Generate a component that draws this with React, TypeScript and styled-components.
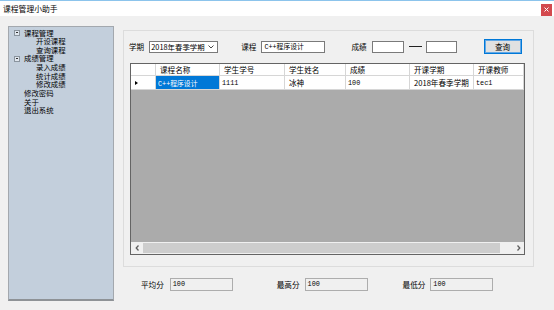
import styled, { createGlobalStyle } from 'styled-components';

const GlobalStyle = createGlobalStyle`
  html, body { margin: 0; padding: 0; background: #f0f0f0; }
  body {
    font-family: "Noto Sans CJK SC", "Liberation Sans", sans-serif;
    font-size: 7.6px;
    color: #000;
  }
  * { box-sizing: border-box; }
`;

const Window = styled.div`
  width: 554px;
  height: 310px;
  border-top: 1px solid #8cc4ec;
  background: #f0f0f0;
  overflow: hidden;
`;

const TitleBar = styled.div`
  height: 15px;
  background: #fff;
  display: flex;
  align-items: center;
  justify-content: space-between;
  padding: 0 2px 0 3px;
  font-size: 7.8px;
`;

const CloseBtn = styled.div`
  width: 11px;
  height: 12px;
  margin-top: 2px;
  background: #d3494e;
  display: flex;
  align-items: center;
  justify-content: center;
`;

const Body = styled.div`
  display: flex;
  align-items: flex-start;
  padding: 10px 0 0 8px;
  gap: 9px;
`;

const TreePanel = styled.div`
  width: 106px;
  height: 275px;
  background: #c3cfdc;
  border: 1px solid #a3a8ae;
  border-bottom: 2px solid #8e9296;
  padding-top: 1.5px;
`;

const TreeRow = styled.div<{ $level: number }>`
  height: 8.67px;
  line-height: 8.67px;
  font-size: 7.4px;
  display: flex;
  align-items: center;
  padding-left: ${(p) => (p.$level === 0 ? 15 : 27)}px;
  color: #000;
  white-space: nowrap;
`;

const Toggle = styled.span`
  width: 6px;
  height: 6px;
  border: 1px solid #8a949e;
  background: #dfe6ee;
  margin-left: -10px;
  margin-right: 4px;
  position: relative;
  &::after {
    content: "";
    position: absolute;
    left: 1px;
    right: 1px;
    top: 1.5px;
    height: 1px;
    background: #333;
  }
`;

const RightCol = styled.div`
  display: flex;
  flex-direction: column;
  margin-top: 4px;
`;

const GroupBox = styled.div`
  width: 411px;
  height: 237px;
  border: 1px solid #dcdcdc;
  padding: 8px 0 0 5px;
`;

const FilterRow = styled.div`
  display: flex;
  align-items: center;
  height: 15px;
`;

const Label = styled.span<{ $ml?: number }>`
  margin-left: ${(p) => p.$ml ?? 0}px;
  white-space: nowrap;
`;

const TextBox = styled.div<{ $w: number; $ml: number; $readOnly?: boolean }>`
  width: ${(p) => p.$w}px;
  height: ${(p) => (p.$readOnly ? 13 : 12)}px;
  margin-left: ${(p) => p.$ml}px;
  background: ${(p) => (p.$readOnly ? '#f0f0f0' : '#fff')};
  border: 1px solid ${(p) => (p.$readOnly ? '#adadad' : '#7a7a7a')};
  font-family: "Liberation Mono", "Noto Sans CJK SC", monospace;
  font-size: 6.8px;
  line-height: 10px;
  padding-left: 2px;
  white-space: nowrap;
  overflow: hidden;
`;

const Select = styled.div`
  width: 69px;
  height: 12px;
  margin-left: 5px;
  background: #fff;
  border: 1px solid #7a7a7a;
  display: flex;
  align-items: center;
  justify-content: space-between;
  padding: 0 3px 0 1px;
  font-size: 7.4px;
  white-space: nowrap;
`;

const Dash = styled.div`
  width: 13px;
  height: 1px;
  background: #222;
  margin-left: 5px;
`;

const Button = styled.div`
  width: 38px;
  height: 15px;
  margin-left: 27px;
  border: 1px solid #0078d7;
  box-shadow: inset 0 0 0 1px #62a8e6;
  background: #e1e1e1;
  display: flex;
  align-items: center;
  justify-content: center;
`;

const Grid = styled.div`
  width: 395px;
  height: 192px;
  margin: 9px 0 0 1px;
  border: 1px solid #646464;
  background: #ababab;
  display: flex;
  flex-direction: column;
`;

const GridRow = styled.div<{ $h: number }>`
  display: grid;
  grid-template-columns: 25px 64px 65px 61px 64px 64px 50px;
  height: ${(p) => p.$h}px;
  background: #fff;
  border-bottom: 1px solid #d6d6d6;
`;

const Cell = styled.div<{ $selected?: boolean; $mono?: boolean }>`
  border-right: 1px solid #d6d6d6;
  padding-left: ${(p) => (p.$mono ? 2 : 4)}px;
  display: flex;
  align-items: center;
  white-space: nowrap;
  overflow: hidden;
  background: ${(p) => (p.$selected ? '#0078d7' : 'transparent')};
  color: ${(p) => (p.$selected ? '#fff' : '#000')};
  font-family: ${(p) =>
    p.$mono ? '"Liberation Mono", "Noto Sans CJK SC", monospace' : 'inherit'};
  font-size: ${(p) => (p.$mono ? '6.8px' : 'inherit')};
`;

const RowPointer = styled.span`
  width: 0;
  height: 0;
  border-top: 2.5px solid transparent;
  border-bottom: 2.5px solid transparent;
  border-left: 3px solid #000;
`;

const GridFill = styled.div`
  flex: 1;
`;

const HScroll = styled.div`
  height: 12px;
  background: #f0f0f0;
  display: flex;
  align-items: stretch;
`;

const ScrollArrow = styled.div`
  width: 12px;
  display: flex;
  align-items: center;
  justify-content: center;
`;

const Track = styled.div`
  flex: 1;
  display: flex;
  padding: 1px 0;
`;

const Thumb = styled.div`
  width: 357px;
  background: #cdcdcd;
`;

const StatsRow = styled.div`
  display: flex;
  align-items: center;
  margin-top: 11px;
  height: 13px;
`;

const Chevron = ({ dir }: { dir: 'l' | 'r' }) => (
  <svg width="5" height="6" viewBox="0 0 5 6">
    <polyline
      points={dir === 'l' ? '3.5,0.5 1.2,3 3.5,5.5' : '1.5,0.5 3.8,3 1.5,5.5'}
      fill="none"
      stroke="#606060"
      strokeWidth="1.3"
    />
  </svg>
);

const columns = ['课程名称', '学生学号', '学生姓名', '成绩', '开课学期', '开课教师'];

export default function App() {
  return (
    <Window>
      <GlobalStyle />
      <TitleBar>
        <span>课程管理小助手</span>
        <CloseBtn>
          <svg width="5" height="5" viewBox="0 0 5 5">
            <path d="M0.5 0.5 L4.5 4.5 M4.5 0.5 L0.5 4.5" stroke="#fff" strokeWidth="1" />
          </svg>
        </CloseBtn>
      </TitleBar>
      <Body>
        <TreePanel>
          <TreeRow $level={0}><Toggle />课程管理</TreeRow>
          <TreeRow $level={1}>开设课程</TreeRow>
          <TreeRow $level={1}>查询课程</TreeRow>
          <TreeRow $level={0}><Toggle />成绩管理</TreeRow>
          <TreeRow $level={1}>录入成绩</TreeRow>
          <TreeRow $level={1}>统计成绩</TreeRow>
          <TreeRow $level={1}>修改成绩</TreeRow>
          <TreeRow $level={0}>修改密码</TreeRow>
          <TreeRow $level={0}>关于</TreeRow>
          <TreeRow $level={0}>退出系统</TreeRow>
        </TreePanel>
        <RightCol>
          <GroupBox>
            <FilterRow>
              <Label>学期</Label>
              <Select>
                <span>2018年春季学期</span>
                <svg width="6" height="4" viewBox="0 0 6 4">
                  <polyline points="0.5,0.5 3,3 5.5,0.5" fill="none" stroke="#333" strokeWidth="0.9" />
                </svg>
              </Select>
              <Label $ml={23}>课程</Label>
              <TextBox $w={64} $ml={5}>C++程序设计</TextBox>
              <Label $ml={26}>成绩</Label>
              <TextBox $w={32} $ml={5} />
              <Dash />
              <TextBox $w={31} $ml={4} />
              <Button>查询</Button>
            </FilterRow>
            <Grid>
              <GridRow $h={12}>
                <Cell />
                {columns.map((c) => (
                  <Cell key={c}>{c}</Cell>
                ))}
              </GridRow>
              <GridRow $h={14}>
                <Cell><RowPointer /></Cell>
                <Cell $selected $mono>C++程序设计</Cell>
                <Cell $mono>1111</Cell>
                <Cell>冰神</Cell>
                <Cell $mono>100</Cell>
                <Cell>2018年春季学期</Cell>
                <Cell $mono>tec1</Cell>
              </GridRow>
              <GridFill />
              <HScroll>
                <ScrollArrow><Chevron dir="l" /></ScrollArrow>
                <Track><Thumb /></Track>
                <ScrollArrow><Chevron dir="r" /></ScrollArrow>
              </HScroll>
            </Grid>
          </GroupBox>
          <StatsRow>
            <Label $ml={18}>平均分</Label>
            <TextBox $w={63} $ml={6} $readOnly>100</TextBox>
            <Label $ml={44}>最高分</Label>
            <TextBox $w={63} $ml={5} $readOnly>100</TextBox>
            <Label $ml={35}>最低分</Label>
            <TextBox $w={63} $ml={5} $readOnly>100</TextBox>
          </StatsRow>
        </RightCol>
      </Body>
    </Window>
  );
}
